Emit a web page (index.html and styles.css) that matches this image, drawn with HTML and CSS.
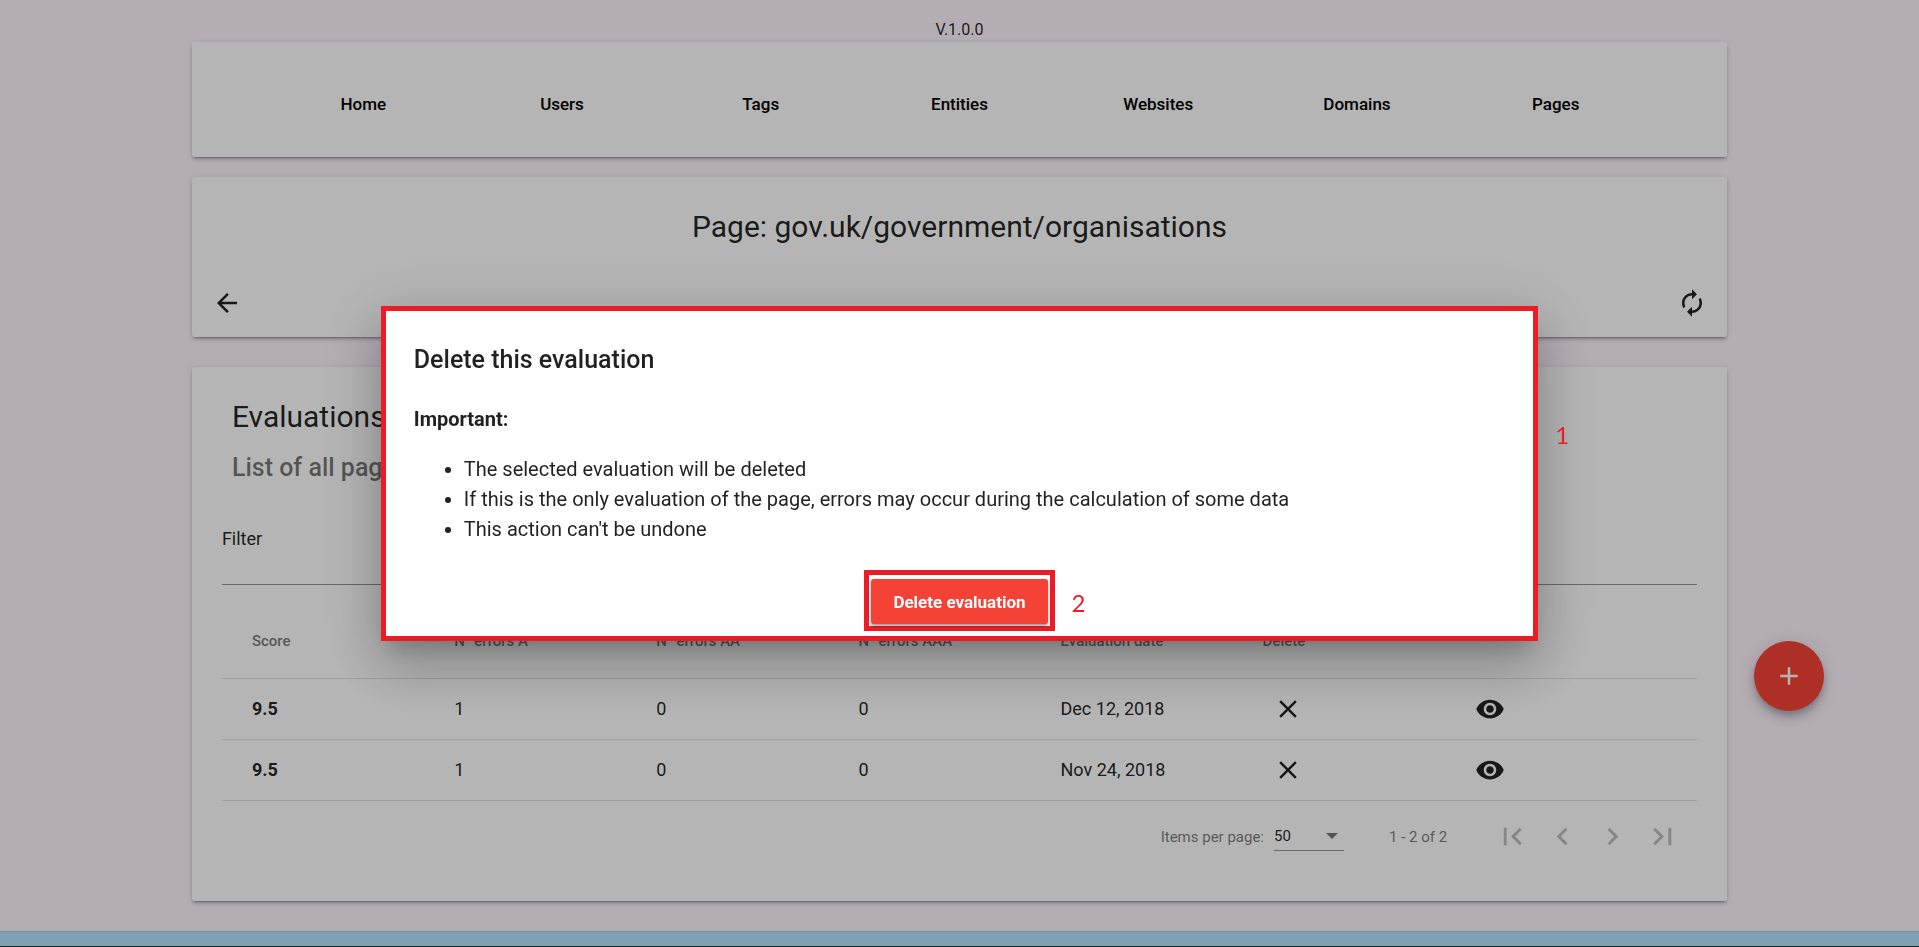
FILE: index.html
```html
<!DOCTYPE html>
<html lang="en">
<head>
<meta charset="utf-8">
<title>Page evaluations</title>
<meta name="viewport" content="width=device-width, initial-scale=1">
<link rel="stylesheet" href="styles.css">
</head>
<body>
<div class="version">V.1.0.0</div>
<main class="content">
  <nav class="card nav">
    <a href="#home">Home</a>
    <a href="#users">Users</a>
    <a href="#tags">Tags</a>
    <a href="#entities">Entities</a>
    <a href="#websites">Websites</a>
    <a href="#domains">Domains</a>
    <a href="#pages">Pages</a>
  </nav>

  <section class="card page-head">
    <h1 class="heading">Page: gov.uk/government/organisations</h1>
    <div class="page-actions">
      <button class="icon-button" type="button" aria-label="Back">
        <svg class="icon" viewBox="0 0 24 24"><path d="M20 11H7.83l5.59-5.59L12 4l-8 8 8 8 1.41-1.41L7.83 13H20v-2z"/></svg>
      </button>
      <button class="icon-button" type="button" aria-label="Evaluate again">
        <svg class="icon" viewBox="0 0 24 24"><path d="M12 6v3l4-4-4-4v3c-4.42 0-8 3.58-8 8 0 1.57.46 3.03 1.24 4.26L6.7 14.8c-.45-.83-.7-1.79-.7-2.8 0-3.31 2.69-6 6-6zm6.76 1.74L17.3 9.2c.44.84.7 1.79.7 2.8 0 3.31-2.69 6-6 6v-3l-4 4 4 4v-3c4.42 0 8-3.58 8-8 0-1.57-.46-3.03-1.24-4.26z"/></svg>
      </button>
    </div>
  </section>

  <section class="card evaluations">
    <header class="section-head">
      <h2 class="heading">Evaluations</h2>
      <p class="subtitle">List of all pages</p>
    </header>
    <div class="filter">
      <label for="filter">Filter</label>
      <input id="filter" type="text">
    </div>
    <table class="table">
      <thead>
        <tr><th>Score</th><th>N° errors A</th><th>N° errors AA</th><th>N° errors AAA</th><th>Evaluation date</th><th>Delete</th><th></th></tr>
      </thead>
      <tbody>
        <tr>
          <td><strong>9.5</strong></td><td>1</td><td>0</td><td>0</td><td>Dec 12, 2018</td>
          <td><button class="icon-button" type="button" aria-label="Delete"><svg class="icon" viewBox="0 0 24 24"><path d="M19 6.41L17.59 5 12 10.59 6.41 5 5 6.41 10.59 12 5 17.59 6.41 19 12 13.41 17.59 19 19 17.59 13.41 12z"/></svg></button></td>
          <td><button class="icon-button" type="button" aria-label="View"><svg class="icon" viewBox="0 0 24 24"><path d="M12 4.500C7 4.500 2.730 7.610 1 12c1.730 4.390 6 7.500 11 7.500s9.270-3.110 11-7.500c-1.730-4.390-6-7.500-11-7.500zM12 17c-2.760 0-5-2.240-5-5s2.240-5 5-5 5 2.240 5 5-2.240 5-5 5zm0-8c-1.660 0-3 1.340-3 3s1.340 3 3 3 3-1.340 3-3-1.340-3-3-3z"/></svg></button></td>
        </tr>
        <tr>
          <td><strong>9.5</strong></td><td>1</td><td>0</td><td>0</td><td>Nov 24, 2018</td>
          <td><button class="icon-button" type="button" aria-label="Delete"><svg class="icon" viewBox="0 0 24 24"><path d="M19 6.41L17.59 5 12 10.59 6.41 5 5 6.41 10.59 12 5 17.59 6.41 19 12 13.41 17.59 19 19 17.59 13.41 12z"/></svg></button></td>
          <td><button class="icon-button" type="button" aria-label="View"><svg class="icon" viewBox="0 0 24 24"><path d="M12 4.500C7 4.500 2.730 7.610 1 12c1.730 4.390 6 7.500 11 7.500s9.270-3.110 11-7.500c-1.730-4.390-6-7.500-11-7.500zM12 17c-2.760 0-5-2.240-5-5s2.240-5 5-5 5 2.240 5 5-2.240 5-5 5zm0-8c-1.660 0-3 1.340-3 3s1.340 3 3 3 3-1.340 3-3-1.340-3-3-3z"/></svg></button></td>
        </tr>
      </tbody>
    </table>
    <div class="paginator">
      <label for="page-size">Items per page:</label>
      <div class="select">
        <select id="page-size"><option>50</option><option>100</option></select>
        <svg class="caret" viewBox="0 0 12 6"><path d="M0 0h12L6 6z"/></svg>
      </div>
      <span class="range">1 - 2 of 2</span>
      <div class="pager">
        <button class="icon-button" type="button" disabled aria-label="First page"><svg class="icon" viewBox="0 0 24 24"><path d="M18.41 16.59L13.82 12l4.590-4.590L17 6l-6 6 6 6zM6 6h2v12H6z"/></svg></button>
        <button class="icon-button" type="button" disabled aria-label="Previous page"><svg class="icon" viewBox="0 0 24 24"><path d="M15.41 7.41L14 6l-6 6 6 6 1.410-1.410L10.830 12z"/></svg></button>
        <button class="icon-button" type="button" disabled aria-label="Next page"><svg class="icon" viewBox="0 0 24 24"><path d="M10 6L8.590 7.410 13.170 12l-4.580 4.590L10 18l6-6z"/></svg></button>
        <button class="icon-button" type="button" disabled aria-label="Last page"><svg class="icon" viewBox="0 0 24 24"><path d="M5.590 7.410L10.180 12l-4.590 4.590L7 18l6-6-6-6zM16 6h2v12h-2z"/></svg></button>
      </div>
    </div>
  </section>
</main>
<footer class="footer"></footer>
<button class="fab" type="button" aria-label="Add">
  <svg class="icon" viewBox="0 0 24 24"><path d="M19 13h-6v6h-2v-6H5v-2h6V5h2v6h6v2z"/></svg>
</button>

<div class="backdrop">
  <div class="dialog" role="dialog" aria-modal="true" aria-labelledby="dialog-title">
    <h2 class="dialog-title" id="dialog-title">Delete this evaluation</h2>
    <p class="important">Important:</p>
    <ul class="notes">
      <li>The selected evaluation will be deleted</li>
      <li>If this is the only evaluation of the page, errors may occur during the calculation of some data</li>
      <li>This action can't be undone</li>
    </ul>
    <div class="dialog-actions">
      <div class="marked">
        <button class="delete-button" type="button">Delete evaluation</button>
        <span class="callout callout-button">2</span>
      </div>
    </div>
    <span class="callout callout-dialog">1</span>
  </div>
</div>
</body>
</html>
```
FILE: styles.css
```css
* {
  box-sizing: border-box;
}

body {
  display: flex;
  flex-direction: column;
  min-height: 100vh;
  margin: 0;
  background: #fef5fe;
  color: rgba(0, 0, 0, 0.87);
  font: 18px/24px Roboto, "Liberation Sans", sans-serif;
}

h1,
h2,
p {
  margin: 0;
}

button,
input,
select {
  border: 0;
  padding: 0;
  background: none;
  color: inherit;
  font: inherit;
}

.version {
  padding-top: 17px;
  text-align: center;
  font-size: 16px;
  line-height: 25px;
}

.content {
  display: flex;
  flex-direction: column;
  width: 80%;
  margin: 0 auto 30px;
}

.card {
  border-radius: 3px;
  background: #fff;
  box-shadow: 0 4px 1px -3px rgba(0, 0, 0, 0.2), 0 3px 3px rgba(0, 0, 0, 0.14), 0 1px 6px rgba(0, 0, 0, 0.12);
}

.nav {
  display: grid;
  grid-template-columns: repeat(7, 1fr);
  padding: 50px 72px 41px;
}

.nav a {
  color: #000;
  font-size: 17px;
  font-weight: 500;
  text-align: center;
  text-decoration: none;
}

.page-head {
  margin-top: 20px;
  padding: 30px 10px 9px;
}

.heading {
  font-size: 30px;
  font-weight: 400;
  line-height: 40px;
}

.page-head .heading {
  text-align: center;
}

.page-actions {
  display: flex;
  justify-content: space-between;
  margin-top: 31px;
}

.icon-button {
  display: flex;
  align-items: center;
  justify-content: center;
  width: 50px;
  height: 50px;
  flex: none;
}

.icon {
  width: 30px;
  height: 30px;
  fill: currentColor;
}

.evaluations {
  margin-top: 30px;
  padding: 30px 30px 28px;
}

.section-head {
  padding: 0 10px;
}

.subtitle {
  margin-top: 16px;
  color: rgba(0, 0, 0, 0.54);
  font-size: 25px;
  font-weight: 500;
  line-height: 30px;
}

.filter {
  display: flex;
  flex-direction: column;
  margin-top: 44px;
}

.filter input {
  height: 34px;
  border-bottom: 1px solid rgba(0, 0, 0, 0.42);
  outline: 0;
}

.table {
  width: 100%;
  margin-top: 20px;
  border-collapse: collapse;
  table-layout: fixed;
}

.table th,
.table td {
  padding: 0;
  border-bottom: 1px solid rgba(0, 0, 0, 0.12);
  text-align: left;
}

.table th {
  height: 73px;
  color: rgba(0, 0, 0, 0.54);
  font-size: 15px;
  font-weight: 500;
}

.table td {
  height: 61px;
}

.table th:first-child,
.table th:last-child {
  width: 15.75%;
}

.table th:first-child,
.table td:first-child {
  padding-left: 30px;
}

.paginator {
  display: flex;
  align-items: center;
  justify-content: flex-end;
  height: 72px;
  padding-right: 10px;
  color: rgba(0, 0, 0, 0.54);
  font-size: 15px;
}

.select {
  display: grid;
  align-items: center;
  width: 70px;
  height: 28px;
  margin: 0 45px 0 10px;
  border-bottom: 1px solid rgba(0, 0, 0, 0.42);
}

.select select {
  grid-area: 1 / 1;
  appearance: none;
  color: rgba(0, 0, 0, 0.87);
}

.caret {
  grid-area: 1 / 1;
  justify-self: end;
  width: 12px;
  height: 6px;
  margin-right: 6px;
  fill: rgba(0, 0, 0, 0.54);
  pointer-events: none;
}

.pager {
  display: flex;
  margin-left: 40px;
  color: rgba(0, 0, 0, 0.26);
}

.pager .icon {
  width: 35px;
  height: 35px;
}

.footer {
  flex: 1;
  min-height: 16px;
  border-top: 1px solid #a5cbe0;
  border-bottom: 1px solid #303030;
  background: #b4e3fe;
}

.fab {
  position: fixed;
  top: 641px;
  right: 95px;
  display: flex;
  align-items: center;
  justify-content: center;
  width: 70px;
  height: 70px;
  border-radius: 50%;
  background: #f44336;
  color: #fff;
  box-shadow: 0 4px 6px -1px rgba(0, 0, 0, 0.2), 0 8px 12px rgba(0, 0, 0, 0.14), 0 1px 22px rgba(0, 0, 0, 0.12);
}

.backdrop {
  position: fixed;
  inset: 0;
  display: flex;
  align-items: center;
  justify-content: center;
  background: rgba(0, 0, 0, 0.29);
}

.dialog {
  position: relative;
  width: calc(60% + 6px);
  padding: 29px 28px 5px;
  border: 5px solid #ed1c24;
  background: #fff;
  box-shadow: 0 14px 19px -9px rgba(0, 0, 0, 0.2), 0 30px 48px 4px rgba(0, 0, 0, 0.14), 0 11px 58px 10px rgba(0, 0, 0, 0.12);
  font-size: 20px;
  line-height: 30px;
}

.dialog-title {
  font-size: 25px;
  font-weight: 500;
  line-height: 40px;
}

.important {
  margin-top: 24px;
  font-weight: 700;
}

.notes {
  margin: 20px 0 0;
  padding-left: 50px;
}

.dialog-actions {
  display: flex;
  justify-content: center;
  margin-top: 26px;
}

.marked {
  position: relative;
  padding: 4px 2px 2px;
  border: 5px solid #ed1c24;
}

.delete-button {
  display: block;
  height: 45px;
  padding: 0 22px;
  border-radius: 3px;
  background: #f44336;
  color: #fff;
  font-size: 17px;
  font-weight: 700;
  box-shadow: 0 2px 3px rgba(0, 0, 0, 0.4);
}

.callout {
  position: absolute;
  color: #ed1c24;
  font: 24px/30px Lato, sans-serif;
}

.callout-button {
  top: 13px;
  left: calc(100% + 22px);
}

.callout-dialog {
  top: 109px;
  left: calc(100% + 22px);
}
```
